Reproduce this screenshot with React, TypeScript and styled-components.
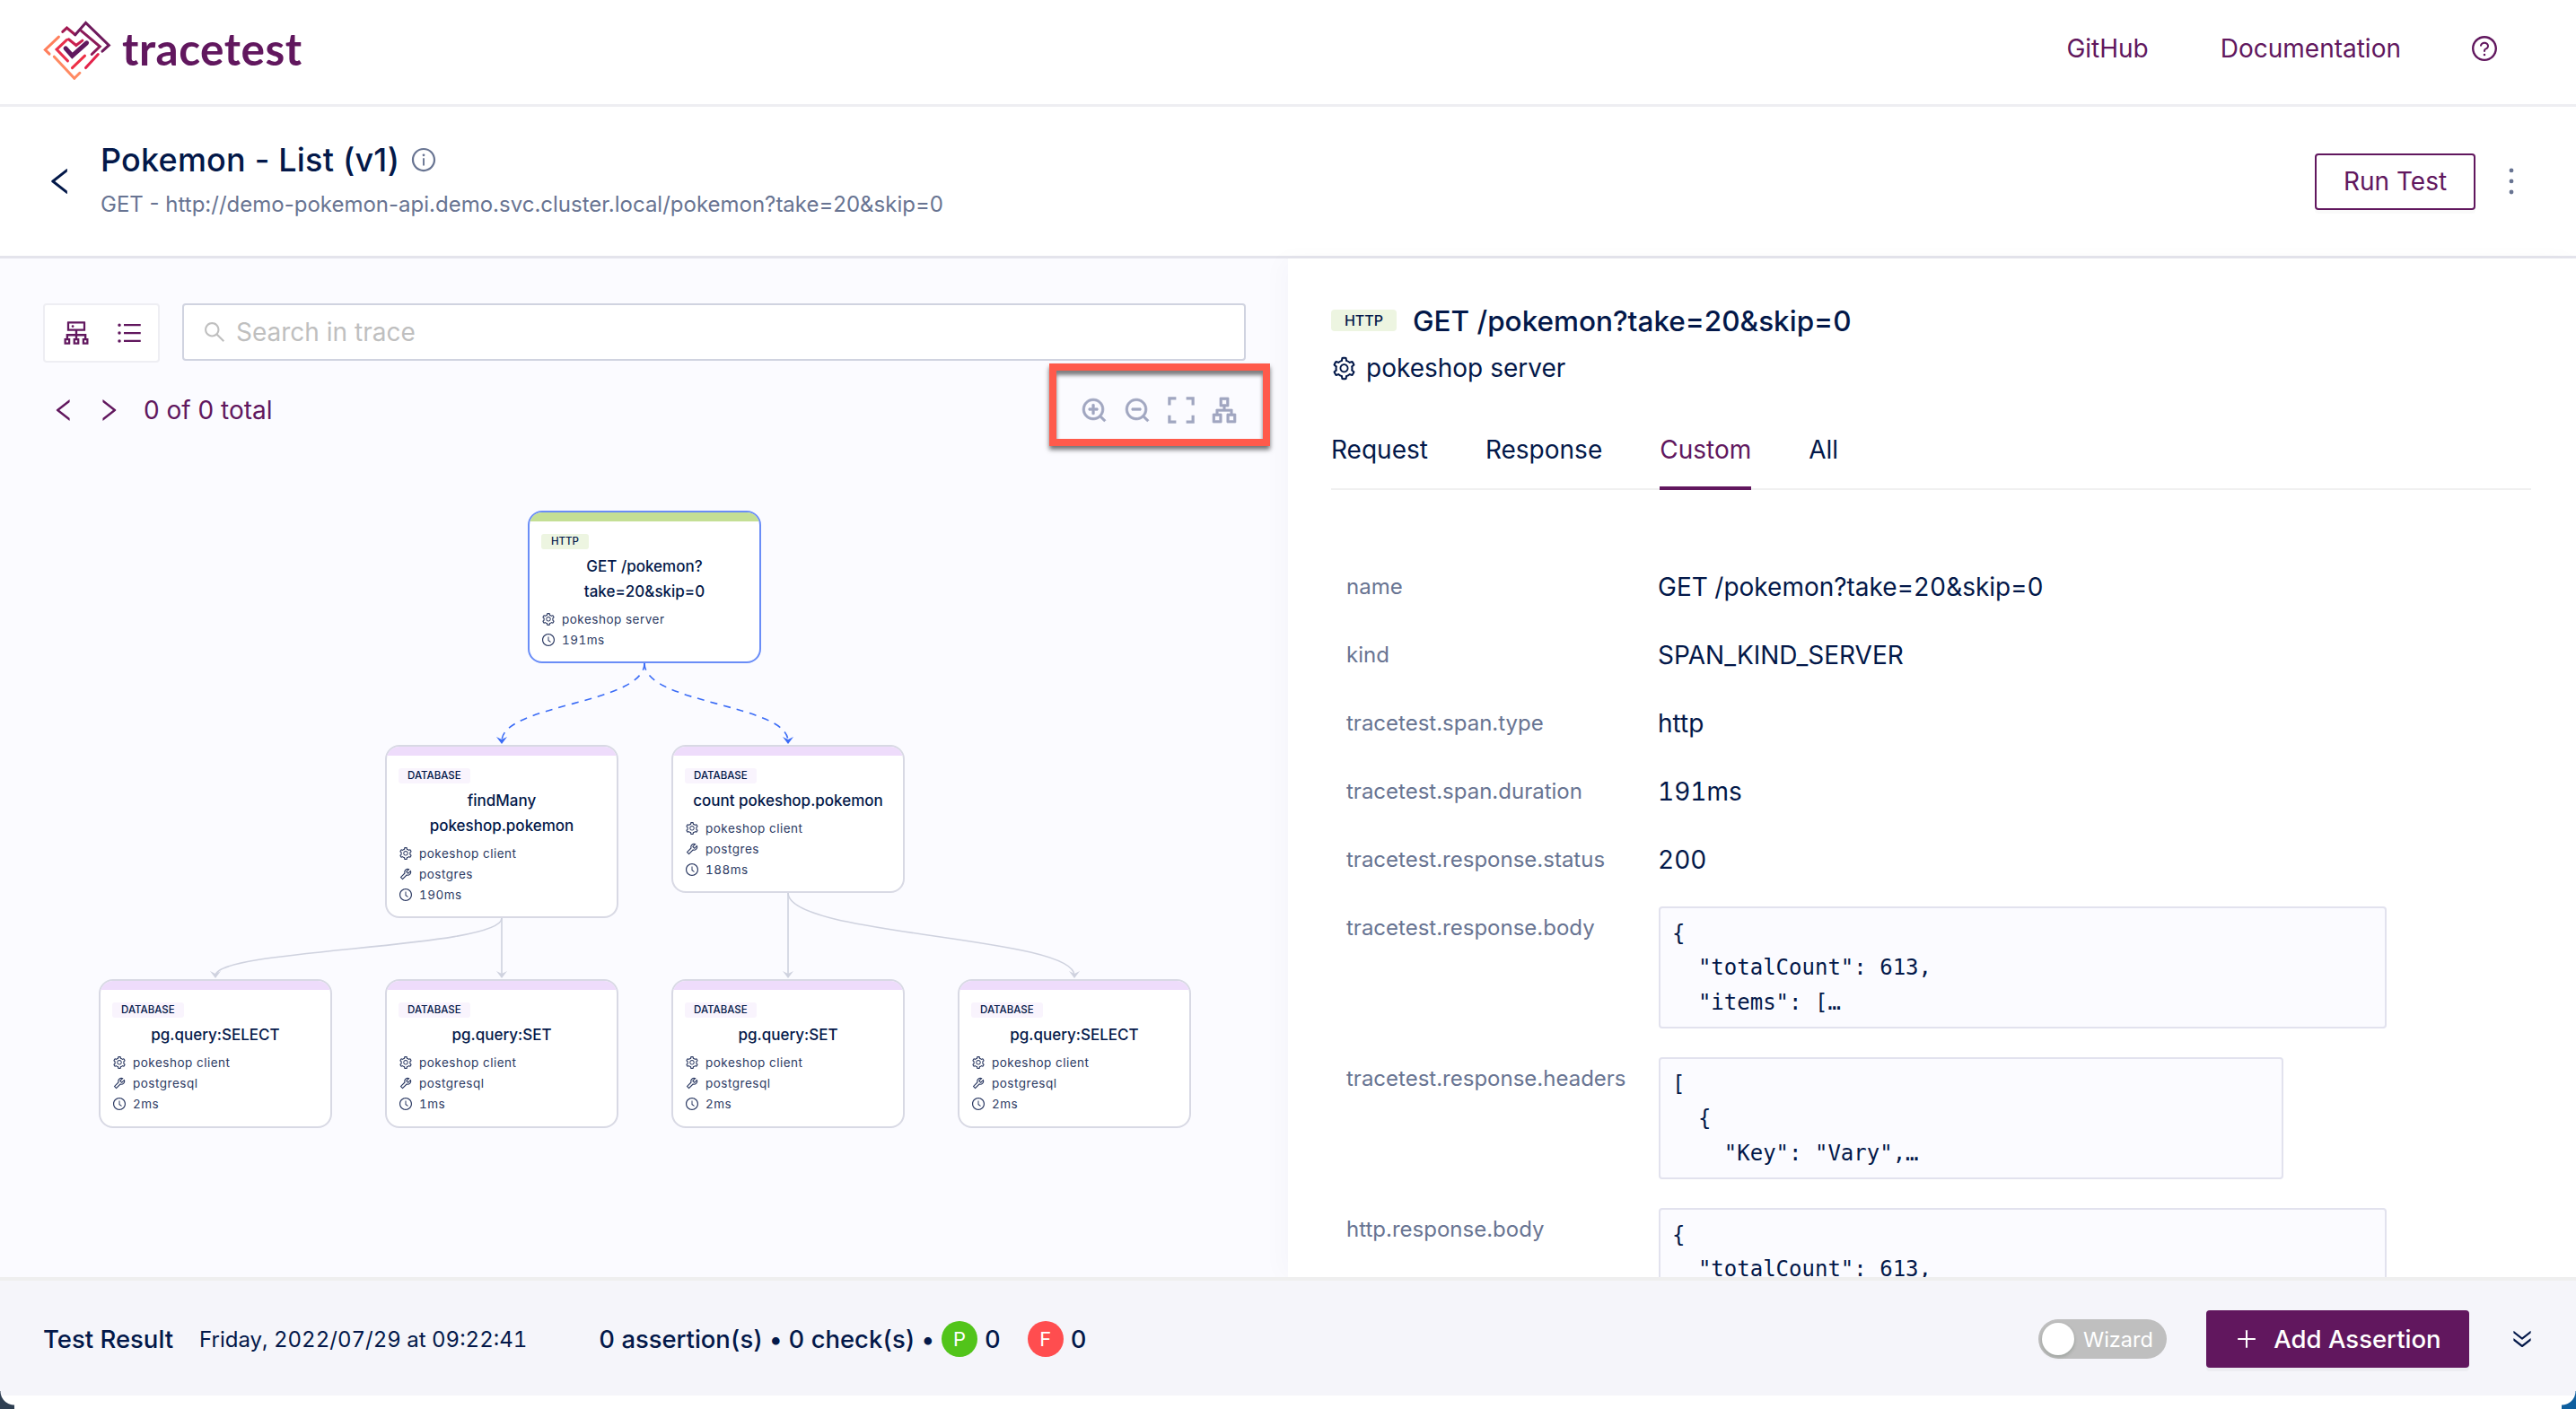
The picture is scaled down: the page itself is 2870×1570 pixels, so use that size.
import React from "react";
import styled, { createGlobalStyle } from "styled-components";
import {
  AiOutlineApartment,
  AiOutlineClockCircle,
  AiOutlineCluster,
  AiOutlineDoubleRight,
  AiOutlineInfoCircle,
  AiOutlineLeft,
  AiOutlineMore,
  AiOutlinePlus,
  AiOutlineQuestionCircle,
  AiOutlineRight,
  AiOutlineSearch,
  AiOutlineSetting,
  AiOutlineTool,
  AiOutlineUnorderedList,
  AiOutlineZoomIn,
  AiOutlineZoomOut,
} from "react-icons/ai";

const PRIMARY = "#61175e";
const NAVY = "#031849";
const GREY = "#687492";

type SpanNode = {
  id: string;
  x: number;
  y: number;
  height: number;
  kind: "HTTP" | "DATABASE";
  lines: string[];
  service: string;
  system?: string;
  duration: string;
  selected?: boolean;
};

const nodes: SpanNode[] = [
  { id: "root", x: 588, y: 69, height: 170, kind: "HTTP", lines: ["GET /pokemon?", "take=20&skip=0"], service: "pokeshop server", duration: "191ms", selected: true },
  { id: "find", x: 429, y: 330, height: 193, kind: "DATABASE", lines: ["findMany", "pokeshop.pokemon"], service: "pokeshop client", system: "postgres", duration: "190ms" },
  { id: "count", x: 748, y: 330, height: 165, kind: "DATABASE", lines: ["count pokeshop.pokemon"], service: "pokeshop client", system: "postgres", duration: "188ms" },
  { id: "s1", x: 110, y: 591, height: 166, kind: "DATABASE", lines: ["pg.query:SELECT"], service: "pokeshop client", system: "postgresql", duration: "2ms" },
  { id: "s2", x: 429, y: 591, height: 166, kind: "DATABASE", lines: ["pg.query:SET"], service: "pokeshop client", system: "postgresql", duration: "1ms" },
  { id: "s3", x: 748, y: 591, height: 166, kind: "DATABASE", lines: ["pg.query:SET"], service: "pokeshop client", system: "postgresql", duration: "2ms" },
  { id: "s4", x: 1067, y: 591, height: 166, kind: "DATABASE", lines: ["pg.query:SELECT"], service: "pokeshop client", system: "postgresql", duration: "2ms" },
];

const edges = [
  { from: [718, 239], to: [559, 330], active: true },
  { from: [718, 239], to: [878, 330], active: true },
  { from: [559, 523], to: [240, 591], active: false },
  { from: [559, 523], to: [559, 591], active: false },
  { from: [878, 495], to: [878, 591], active: false },
  { from: [878, 495], to: [1197, 591], active: false },
];

const attributes = [
  { name: "name", value: "GET /pokemon?take=20&skip=0" },
  { name: "kind", value: "SPAN_KIND_SERVER" },
  { name: "tracetest.span.type", value: "http" },
  { name: "tracetest.span.duration", value: "191ms" },
  { name: "tracetest.response.status", value: "200" },
];

const codeAttributes = [
  { name: "tracetest.response.body", wide: true, code: '{\n  "totalCount": 613,\n  "items": […\n    {' },
  { name: "tracetest.response.headers", wide: false, code: '[\n  {\n    "Key": "Vary",…\n    "Value": "Origin",' },
  { name: "http.response.body", wide: true, code: '{\n  "totalCount": 613,\n  "items": […' },
];

const App = () => {
  return (
    <>
      <GlobalStyle />
      <Page>
        <TopBar>
          <Brand>
            <LogoMark viewBox="50 35 230 200" fill="none" strokeWidth="9" strokeLinecap="round" strokeLinejoin="miter">
              <polyline points="118,75 132,62 160,85" stroke="#a31a52" />
              <polyline points="160,85 195,45 272,120 250,140" stroke="#6e1a5c" />
              <polyline points="180,72 242,124 215,150" stroke="#8c1a58" />
              <polyline points="105,92 60,135 74,149" stroke="#ff7f5c" />
              <polyline points="132,102 98,134 135,172" stroke="#e92f4b" />
              <polyline points="138,100 163,120 184,104" stroke="#c81f4f" />
              <polyline points="90,158 157,230 175,212" stroke="#ff8a62" />
              <polyline points="150,195 192,155" stroke="#ee2f45" />
              <polyline points="195,195 236,150" stroke="#e3224a" />
              <polyline points="128,130 150,155 198,112" stroke={PRIMARY} strokeWidth="15" />
            </LogoMark>
            <BrandName>tracetest</BrandName>
          </Brand>
          <TopNav>
            <NavLink>GitHub</NavLink>
            <NavLink>Documentation</NavLink>
            <HelpIcon />
          </TopNav>
        </TopBar>

        <TestHeader>
          <BackIcon />
          <TestInfo>
            <TitleRow>
              <TestTitle>Pokemon - List (v1)</TestTitle>
              <InfoIcon />
            </TitleRow>
            <TestUrl>GET - http://demo-pokemon-api.demo.svc.cluster.local/pokemon?take=20&amp;skip=0</TestUrl>
          </TestInfo>
          <RunButton>Run Test</RunButton>
          <MoreIcon />
        </TestHeader>

        <Body>
          <TracePanel>
            <TraceTools>
              <SearchRow>
                <ViewSwitch>
                  <AiOutlineCluster size={36} color={PRIMARY} />
                  <AiOutlineUnorderedList size={32} color={PRIMARY} />
                </ViewSwitch>
                <SearchBox>
                  <AiOutlineSearch size={28} color="#bfbfbf" />
                  <SearchText>Search in trace</SearchText>
                </SearchBox>
              </SearchRow>
              <PagingRow>
                <Paging>
                  <AiOutlineLeft size={32} />
                  <AiOutlineRight size={32} />
                  <PagingText>0 of 0 total</PagingText>
                </Paging>
                <ZoomTools>
                  <AiOutlineZoomIn size={32} />
                  <AiOutlineZoomOut size={32} />
                  <FitIcon viewBox="0 0 32 32" fill="none" stroke="currentColor">
                    <path d="M2 10V2h8M22 2h8v8M30 22v8h-8M10 30H2v-8" />
                  </FitIcon>
                  <AiOutlineApartment size={32} />
                </ZoomTools>
              </PagingRow>
            </TraceTools>
            <Annotation />
            <Canvas>
              <EdgeLayer width="1435" height="800">
                {edges.map((e, i) => {
                  const [sx, sy] = e.from;
                  const [tx, ty] = e.to;
                  const midY = (sy + ty) / 2;
                  const color = e.active ? "#3b6cf6" : "#cfd2df";
                  return (
                    <g key={i}>
                      <path
                        d={`M${sx} ${sy} C${sx} ${midY} ${tx} ${midY} ${tx} ${ty - 4}`}
                        fill="none"
                        stroke={color}
                        strokeWidth={1.6}
                        strokeDasharray={e.active ? "8 7" : undefined}
                      />
                      <path d={`M${tx - 6} ${ty - 9} L${tx} ${ty - 1} L${tx + 6} ${ty - 9} L${tx} ${ty - 6}Z`} fill={color} />
                    </g>
                  );
                })}
              </EdgeLayer>
              {nodes.map((n) => (
                <NodeCard key={n.id} $x={n.x} $y={n.y} $height={n.height} $selected={!!n.selected}>
                  <NodeStripe $kind={n.kind} />
                  <NodeBody>
                    <KindBadge $kind={n.kind}>{n.kind}</KindBadge>
                    <NodeTitle>
                      {n.lines.map((l) => (
                        <div key={l}>{l}</div>
                      ))}
                    </NodeTitle>
                    <NodeMeta>
                      <AiOutlineSetting size={16} />
                      <span>{n.service}</span>
                    </NodeMeta>
                    {n.system && (
                      <NodeMeta>
                        <AiOutlineTool size={16} />
                        <span>{n.system}</span>
                      </NodeMeta>
                    )}
                    <NodeMeta>
                      <AiOutlineClockCircle size={16} />
                      <span>{n.duration}</span>
                    </NodeMeta>
                  </NodeBody>
                </NodeCard>
              ))}
            </Canvas>
          </TracePanel>

          <DetailPanel>
            <SpanHeading>
              <HeadBadge>HTTP</HeadBadge>
              <SpanTitle>GET /pokemon?take=20&amp;skip=0</SpanTitle>
            </SpanHeading>
            <SpanService>
              <AiOutlineSetting size={29} />
              <span>pokeshop server</span>
            </SpanService>
            <Tabs>
              <Tab>Request</Tab>
              <Tab>Response</Tab>
              <Tab $active>Custom</Tab>
              <Tab>All</Tab>
            </Tabs>
            <AttrList>
              {attributes.map((a) => (
                <AttrRow key={a.name}>
                  <AttrName>{a.name}</AttrName>
                  <AttrValue>{a.value}</AttrValue>
                </AttrRow>
              ))}
              {codeAttributes.map((a) => (
                <AttrRow key={a.name}>
                  <AttrName>{a.name}</AttrName>
                  <CodeBox $wide={a.wide}>{a.code}</CodeBox>
                </AttrRow>
              ))}
            </AttrList>
          </DetailPanel>
        </Body>

        <ResultBar>
          <ResultTitle>Test Result</ResultTitle>
          <ResultDate>Friday, 2022/07/29 at 09:22:41</ResultDate>
          <ResultCounts>
            <span>0 assertion(s)</span>
            <Dot>•</Dot>
            <span>0 check(s)</span>
            <Dot>•</Dot>
            <StatusBadge $tone="#52c41a">P</StatusBadge>
            <StatusCount>0</StatusCount>
            <StatusBadge $tone="#ff4d4f" $spaced>F</StatusBadge>
            <StatusCount>0</StatusCount>
          </ResultCounts>
          <ResultActions>
            <WizardSwitch>
              <WizardKnob />
              <span>Wizard</span>
            </WizardSwitch>
            <AddButton>
              <AiOutlinePlus size={28} />
              <span>Add Assertion</span>
            </AddButton>
            <CollapseIcon />
          </ResultActions>
        </ResultBar>
        <WindowCorner $side="left" />
        <WindowCorner $side="right" />
      </Page>
    </>
  );
};

export default App;

const GlobalStyle = createGlobalStyle`
  html, body {
    margin: 0;
    padding: 0;
    background: #fff;
  }
  * {
    box-sizing: border-box;
  }
`;

const Page = styled.div`
  position: relative;
  width: 2870px;
  height: 1570px;
  display: flex;
  flex-direction: column;
  overflow: hidden;
  background: #fff;
  color: ${NAVY};
  font-family: Inter, "Liberation Sans", sans-serif;
`;

const TopBar = styled.header`
  height: 119px;
  flex: none;
  display: flex;
  align-items: center;
  justify-content: space-between;
  padding: 0 86px 8px 47px;
  border-bottom: 3px solid #eeeef2;
`;

const Brand = styled.div`
  display: flex;
  align-items: center;
  gap: 12px;
  padding-top: 2px;
`;

const LogoMark = styled.svg`
  width: 77px;
  height: 67px;
`;

const BrandName = styled.div`
  font-family: Lato, sans-serif;
  font-size: 49.5px;
  font-weight: 700;
  line-height: 1;
  color: ${PRIMARY};
  letter-spacing: 0.5px;
`;

const TopNav = styled.nav`
  display: flex;
  align-items: center;
  gap: 80px;
`;

const NavLink = styled.a`
  font-size: 28px;
  color: ${PRIMARY};
`;

const HelpIcon = styled(AiOutlineQuestionCircle)`
  width: 32px;
  height: 32px;
  margin-left: -3px;
  color: ${PRIMARY};
`;

const TestHeader = styled.section`
  height: 169px;
  flex: none;
  display: flex;
  align-items: center;
  padding: 0 50px 0 48px;
  border-bottom: 3px solid #e4e4ec;
`;

const BackIcon = styled(AiOutlineLeft)`
  width: 38px;
  height: 38px;
  margin-right: 26px;
  color: ${NAVY};
`;

const TestInfo = styled.div`
  flex: 1;
  display: flex;
  flex-direction: column;
  gap: 11px;
  padding-bottom: 5px;
`;

const TitleRow = styled.div`
  display: flex;
  align-items: center;
  gap: 12px;
`;

const TestTitle = styled.h1`
  margin: 0;
  font-size: 36px;
  line-height: 46px;
  font-weight: 500;
  letter-spacing: 0.2px;
`;

const InfoIcon = styled(AiOutlineInfoCircle)`
  width: 30px;
  height: 30px;
  color: ${GREY};
`;

const TestUrl = styled.div`
  font-size: 24px;
  line-height: 32px;
  color: ${GREY};
`;

const RunButton = styled.button`
  width: 179px;
  height: 63px;
  background: #fff;
  border: 2.5px solid ${PRIMARY};
  border-radius: 4px;
  box-shadow: 0 4px 0 rgba(0, 0, 0, 0.02);
  color: ${PRIMARY};
  font-family: inherit;
  font-size: 28px;
`;

const MoreIcon = styled(AiOutlineMore)`
  width: 44px;
  height: 44px;
  margin-left: 18px;
  color: ${GREY};
`;

const Body = styled.main`
  flex: 1;
  min-height: 0;
  display: flex;
`;

const TracePanel = styled.div`
  position: relative;
  width: 1435px;
  flex: none;
  display: flex;
  flex-direction: column;
  background: #fbfbff;
`;

const TraceTools = styled.div`
  width: 1388px;
  padding: 50px 0 23px 48px;
`;

const SearchRow = styled.div`
  display: flex;
  gap: 25px;
`;

const ViewSwitch = styled.div`
  width: 130px;
  height: 66px;
  flex: none;
  display: flex;
  align-items: center;
  justify-content: center;
  gap: 25px;
  background: #fff;
  border: 2px solid #eeeef3;
  border-radius: 4px;
`;

const SearchBox = styled.div`
  flex: 1;
  height: 64px;
  display: flex;
  align-items: center;
  gap: 10px;
  padding: 0 20px;
  background: #fff;
  border: 2px solid #d0d3e0;
  border-radius: 4px;
`;

const SearchText = styled.span`
  font-size: 28px;
  color: #bfbfbf;
`;

const PagingRow = styled.div`
  display: flex;
  align-items: center;
  justify-content: space-between;
  height: 40px;
  margin-top: 33px;
  padding: 0 8px 0 7px;
`;

const Paging = styled.div`
  display: flex;
  align-items: center;
  gap: 18px;
  color: ${PRIMARY};
`;

const PagingText = styled.span`
  margin-left: 5px;
  font-size: 28px;
`;

const ZoomTools = styled.div`
  display: flex;
  align-items: center;
  gap: 16.5px;
  color: #a0a6c0;

  svg {
    stroke: currentColor;
    stroke-width: 24px;
  }
`;

const FitIcon = styled.svg`
  width: 32px;
  height: 32px;
  padding: 1px;

  && {
    stroke-width: 3.4px;
  }
`;

const Annotation = styled.div`
  position: absolute;
  left: 1169px;
  top: 117px;
  width: 246px;
  height: 92px;
  border: 8px solid #ff5a4b;
  box-shadow: 0 4px 5px rgba(0, 0, 0, 0.55), inset 0 5px 4px rgba(0, 0, 0, 0.5);
`;

const Canvas = styled.div`
  position: relative;
  flex: 1;
`;

const EdgeLayer = styled.svg`
  position: absolute;
  left: 0;
  top: 0;
`;

const NodeCard = styled.div<{ $x: number; $y: number; $height: number; $selected: boolean }>`
  position: absolute;
  left: ${(p) => p.$x}px;
  top: ${(p) => p.$y}px;
  width: 260px;
  height: ${(p) => p.$height}px;
  background: #fff;
  border: 2px solid ${(p) => (p.$selected ? "#6a8df7" : "#d8d9e4")};
  border-radius: 16px;
  overflow: hidden;
`;

const NodeStripe = styled.div<{ $kind: string }>`
  height: 10px;
  background: ${(p) => (p.$kind === "HTTP" ? "#c4df95" : "#eedcfb")};
`;

const NodeBody = styled.div`
  padding: 14px 13px 0;
`;

const KindBadge = styled.div<{ $kind: string }>`
  width: fit-content;
  height: 17px;
  padding: 0 ${(p) => (p.$kind === "HTTP" ? 11 : 10)}px;
  border-radius: 3px;
  background: ${(p) => (p.$kind === "HTTP" ? "#edf5e1" : "#f9f4fd")};
  font-size: 11.5px;
  font-weight: 500;
  line-height: 17px;
`;

const NodeTitle = styled.div`
  margin: 5px -10px 5px;
  text-align: center;
  font-size: 17px;
  font-weight: 500;
  line-height: 28px;
`;

const NodeMeta = styled.div`
  display: flex;
  align-items: center;
  gap: 7px;
  height: 23px;
  font-size: 13.5px;
  font-feature-settings: "tnum";
  letter-spacing: 0.5px;
  color: #2c3a63;
`;

const DetailPanel = styled.div`
  flex: 1;
  min-width: 0;
  overflow: hidden;
  padding: 53px 50px 0 48px;
  box-shadow: -8px 0 24px rgba(20, 20, 70, 0.025);
  z-index: 1;
`;

const SpanHeading = styled.div`
  display: flex;
  align-items: center;
  gap: 18px;
  height: 32px;
`;

const HeadBadge = styled.div`
  width: 73px;
  height: 24px;
  border-radius: 4px;
  background: #edf5e1;
  text-align: center;
  font-size: 16px;
  font-weight: 500;
  line-height: 24px;
`;

const SpanTitle = styled.div`
  font-size: 31.5px;
  font-weight: 500;
`;

const SpanService = styled.div`
  display: flex;
  align-items: center;
  gap: 10px;
  margin-top: 19px;
  height: 36px;
  font-size: 28px;
`;

const Tabs = styled.div`
  display: flex;
  gap: 64px;
  margin-top: 51px;
  height: 67px;
  border-bottom: 2px solid #f0f0f0;
  width: 1337px;
`;

const Tab = styled.div<{ $active?: boolean }>`
  height: 67px;
  font-size: 28px;
  line-height: 44px;
  color: ${(p) => (p.$active ? PRIMARY : NAVY)};
  border-bottom: ${(p) => (p.$active ? `4px solid ${PRIMARY}` : "none")};
`;

const AttrList = styled.div`
  display: flex;
  flex-direction: column;
  gap: 32px;
  margin-top: 84px;
  padding-left: 17px;
`;

const AttrRow = styled.div`
  display: flex;
  align-items: flex-start;
`;

const AttrName = styled.div`
  width: 347px;
  height: 44px;
  flex: none;
  font-size: 24px;
  line-height: 48px;
  color: ${GREY};
`;

const AttrValue = styled.div`
  height: 44px;
  font-size: 28px;
  font-feature-settings: "tnum";
  line-height: 48px;
`;

const CodeBox = styled.pre<{ $wide: boolean }>`
  margin: 0 0 0 1px;
  width: ${(p) => (p.$wide ? 811 : 696)}px;
  height: 136px;
  flex: none;
  overflow: hidden;
  padding: 9px 13px;
  background: #fbfbff;
  border: 2px solid #e2e2ee;
  border-radius: 4px;
  font-family: "DejaVu Sans Mono", monospace;
  font-size: 24px;
  line-height: 38.3px;
`;

const ResultBar = styled.footer`
  height: 132px;
  flex: none;
  display: flex;
  align-items: center;
  margin-bottom: 15px;
  padding: 2px 46px 0 48px;
  background: #f5f5fa;
  border-top: 4px solid #efefef;
  z-index: 2;
`;

const ResultTitle = styled.div`
  font-size: 27.5px;
  font-weight: 500;
`;

const ResultDate = styled.div`
  margin-left: 29px;
  font-size: 24px;
  font-feature-settings: "tnum";
`;

const ResultCounts = styled.div`
  display: flex;
  align-items: center;
  margin-left: 80px;
  font-size: 27.4px;
  font-weight: 500;
  font-feature-settings: "tnum";
`;

const Dot = styled.span`
  margin: 0 7px;
`;

const StatusBadge = styled.span<{ $tone: string; $spaced?: boolean }>`
  width: 40px;
  height: 40px;
  margin-left: ${(p) => (p.$spaced ? 30 : 1)}px;
  border-radius: 50%;
  background: ${(p) => p.$tone};
  color: #fff;
  text-align: center;
  font-size: 22px;
  font-weight: 400;
  line-height: 40px;
`;

const StatusCount = styled.span`
  margin-left: 8px;
`;

const ResultActions = styled.div`
  margin-left: auto;
  display: flex;
  align-items: center;
`;

const WizardSwitch = styled.div`
  width: 143px;
  height: 44px;
  display: flex;
  align-items: center;
  gap: 10px;
  padding-left: 4px;
  border-radius: 22px;
  background: #bfbfbf;
  color: #fff;
  font-size: 23.5px;
`;

const WizardKnob = styled.div`
  width: 36px;
  height: 36px;
  border-radius: 50%;
  background: #fff;
  box-shadow: 0 2px 4px rgba(0, 35, 11, 0.2);
`;

const AddButton = styled.button`
  width: 293px;
  height: 64px;
  margin-left: 44px;
  display: flex;
  align-items: center;
  justify-content: center;
  gap: 16px;
  border: 0;
  border-radius: 4px;
  background: ${PRIMARY};
  box-shadow: 0 4px 0 rgba(0, 0, 0, 0.03);
  color: #fff;
  font-family: inherit;
  font-size: 27.5px;
  font-weight: 500;
`;

const CollapseIcon = styled(AiOutlineDoubleRight)`
  width: 28px;
  height: 28px;
  margin-left: 45px;
  transform: rotate(90deg);
  color: ${NAVY};
`;

const WindowCorner = styled.div<{ $side: "left" | "right" }>`
  position: absolute;
  bottom: 0;
  ${(p) => p.$side}: 0;
  width: 16px;
  height: 20px;
  background: ${(p) =>
    p.$side === "left"
      ? "radial-gradient(circle at 100% 0, transparent 15px, #2f3f52 16px)"
      : "radial-gradient(circle at 0 0, transparent 15px, #0f5f9e 16px)"};
  z-index: 3;
`;
